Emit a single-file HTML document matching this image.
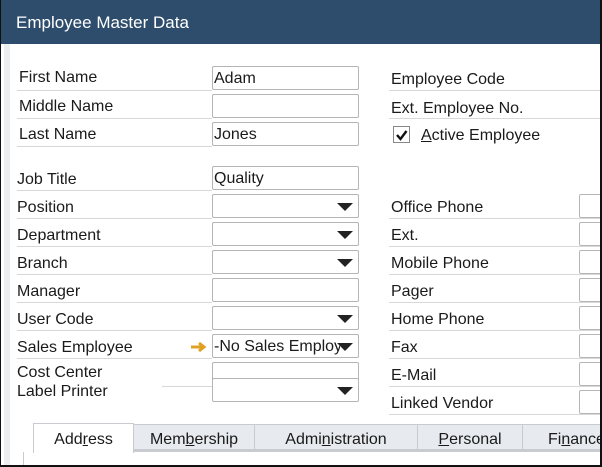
<!DOCTYPE html>
<html><head><style>
*{margin:0;padding:0;box-sizing:border-box}
body{width:602px;height:467px;overflow:hidden;background:#fff;font-family:"Liberation Sans",sans-serif;font-size:16px;color:#1a1a1a;position:relative}
.frame{position:absolute;left:0;top:0;width:602px;height:467px;border-left:1px solid #111;border-right:2px solid #111;border-bottom:2px solid #111}
.hdr{position:absolute;left:0;top:0;width:602px;height:44px;background:#2e4d6c;color:#fff;font-size:17px;padding:13px 0 0 16px}
.strip{position:absolute;left:4px;top:44px;width:6px;height:421px;background:#eceeef}
.l{position:absolute;white-space:nowrap}
.ln{position:absolute;height:1px;background:#d8d8d8}
.f{position:absolute;border:1px solid #b5b5b5;border-radius:2px;background:#fff;padding:3px 0 0 1px;overflow:hidden;white-space:nowrap}
.dd::after{content:"";position:absolute;right:5px;top:8px;border-left:8px solid transparent;border-right:8px solid transparent;border-top:8px solid #222}
.clip{display:block;width:126px;overflow:hidden}
.tab{position:absolute;top:424px;height:28px;background:#e7eaee;border:1px solid #c8cbd0;border-bottom:3px solid #c8cbd0;text-align:center;padding-top:6px}
u{text-decoration:underline}
</style></head><body>
<div class="hdr">Employee Master Data</div>
<div class="strip"></div>

<div class="l" style="left:19px;top:69px">First Name</div>
<div class="ln" style="left:17px;top:90px;width:195px"></div>
<div class="l" style="left:19px;top:98px">Middle Name</div>
<div class="ln" style="left:17px;top:118px;width:195px"></div>
<div class="l" style="left:19px;top:126px">Last Name</div>
<div class="ln" style="left:17px;top:146px;width:195px"></div>
<div class="f" style="left:212px;top:66px;width:147px;height:24px">Adam</div>
<div class="f" style="left:212px;top:94px;width:147px;height:24px"></div>
<div class="f" style="left:212px;top:122px;width:147px;height:24px">Jones</div>

<div class="l" style="left:17px;top:171px">Job Title</div>
<div class="ln" style="left:17px;top:190px;width:195px"></div>
<div class="f" style="left:212px;top:166px;width:147px;height:24px">Quality</div>

<div class="l" style="left:17px;top:199px">Position</div>
<div class="ln" style="left:17px;top:218px;width:195px"></div>
<div class="f dd" style="left:212px;top:194px;width:147px;height:24px"></div>
<div class="l" style="left:17px;top:227px">Department</div>
<div class="ln" style="left:17px;top:246px;width:195px"></div>
<div class="f dd" style="left:212px;top:222px;width:147px;height:24px"></div>
<div class="l" style="left:17px;top:255px">Branch</div>
<div class="ln" style="left:17px;top:274px;width:195px"></div>
<div class="f dd" style="left:212px;top:250px;width:147px;height:24px"></div>
<div class="l" style="left:17px;top:283px">Manager</div>
<div class="ln" style="left:17px;top:302px;width:195px"></div>
<div class="f" style="left:212px;top:278px;width:147px;height:24px"></div>
<div class="l" style="left:17px;top:311px">User Code</div>
<div class="ln" style="left:17px;top:330px;width:195px"></div>
<div class="f dd" style="left:212px;top:306px;width:147px;height:24px"></div>
<div class="l" style="left:17px;top:339px">Sales Employee</div>
<div class="ln" style="left:17px;top:358px;width:195px"></div>
<svg style="position:absolute;left:190px;top:340px" width="18" height="14"><path d="M1 7H13M9 3L14 7L9 11" stroke="#e0a020" stroke-width="3" fill="none"/></svg>
<div class="f dd" style="left:212px;top:334px;width:147px;height:24px"><span class="clip">-No Sales Employee</span></div>
<div class="l" style="left:17px;top:364px">Cost Center</div>
<div class="l" style="left:17px;top:383px">Label Printer</div>
<div class="ln" style="left:162px;top:386px;width:50px"></div>
<div class="f" style="left:212px;top:362px;width:147px;height:20px"></div>
<div class="f dd" style="left:212px;top:378px;width:147px;height:24px"></div>

<div class="l" style="left:391px;top:71px">Employee Code</div>
<div class="ln" style="left:389px;top:90px;width:213px"></div>
<div class="l" style="left:391px;top:100px">Ext. Employee No.</div>
<div class="ln" style="left:389px;top:118px;width:213px"></div>
<div style="position:absolute;left:393px;top:126px;width:17px;height:17px;border:1px solid #888;background:#fff"></div>
<svg style="position:absolute;left:395px;top:128px" width="14" height="14"><path d="M2 7L5.5 11L11.5 3" stroke="#111" stroke-width="2.4" fill="none"/></svg>
<div class="l" style="left:421px;top:127px"><u>A</u>ctive Employee</div>

<div class="l" style="left:391px;top:199px">Office Phone</div>
<div class="l" style="left:391px;top:227px">Ext.</div>
<div class="l" style="left:391px;top:255px">Mobile Phone</div>
<div class="l" style="left:391px;top:283px">Pager</div>
<div class="l" style="left:391px;top:311px">Home Phone</div>
<div class="l" style="left:391px;top:339px">Fax</div>
<div class="l" style="left:391px;top:367px">E-Mail</div>
<div class="l" style="left:391px;top:395px">Linked Vendor</div>
<div class="ln" style="left:389px;top:218px;width:213px"></div>
<div class="ln" style="left:389px;top:246px;width:213px"></div>
<div class="ln" style="left:389px;top:274px;width:213px"></div>
<div class="ln" style="left:389px;top:302px;width:213px"></div>
<div class="ln" style="left:389px;top:330px;width:213px"></div>
<div class="ln" style="left:389px;top:358px;width:213px"></div>
<div class="ln" style="left:389px;top:386px;width:213px"></div>
<div class="ln" style="left:389px;top:414px;width:213px"></div>
<div class="f" style="left:579px;top:194px;width:30px;height:24px"></div>
<div class="f" style="left:579px;top:222px;width:30px;height:24px"></div>
<div class="f" style="left:579px;top:250px;width:30px;height:24px"></div>
<div class="f" style="left:579px;top:278px;width:30px;height:24px"></div>
<div class="f" style="left:579px;top:306px;width:30px;height:24px"></div>
<div class="f" style="left:579px;top:334px;width:30px;height:24px"></div>
<div class="f" style="left:579px;top:362px;width:30px;height:24px"></div>
<div class="f" style="left:579px;top:390px;width:30px;height:24px"></div>

<div class="ln" style="left:23px;top:452px;width:1px;height:14px;background:#c8cbd0"></div>
<div class="tab" style="left:133px;width:122px">Mem<u>b</u>ership</div>
<div class="tab" style="left:254px;width:164px">Admi<u>n</u>istration</div>
<div class="tab" style="left:417px;width:106px"><u>P</u>ersonal</div>
<div class="tab" style="left:522px;width:100px;text-align:left;padding-left:25px">Fi<u>n</u>ance</div>
<div class="tab" style="left:33px;width:101px;background:#fff;border-bottom:none;height:30px;top:423px;padding-top:7px">Add<u>r</u>ess</div>
<div class="frame"></div>
</body></html>
